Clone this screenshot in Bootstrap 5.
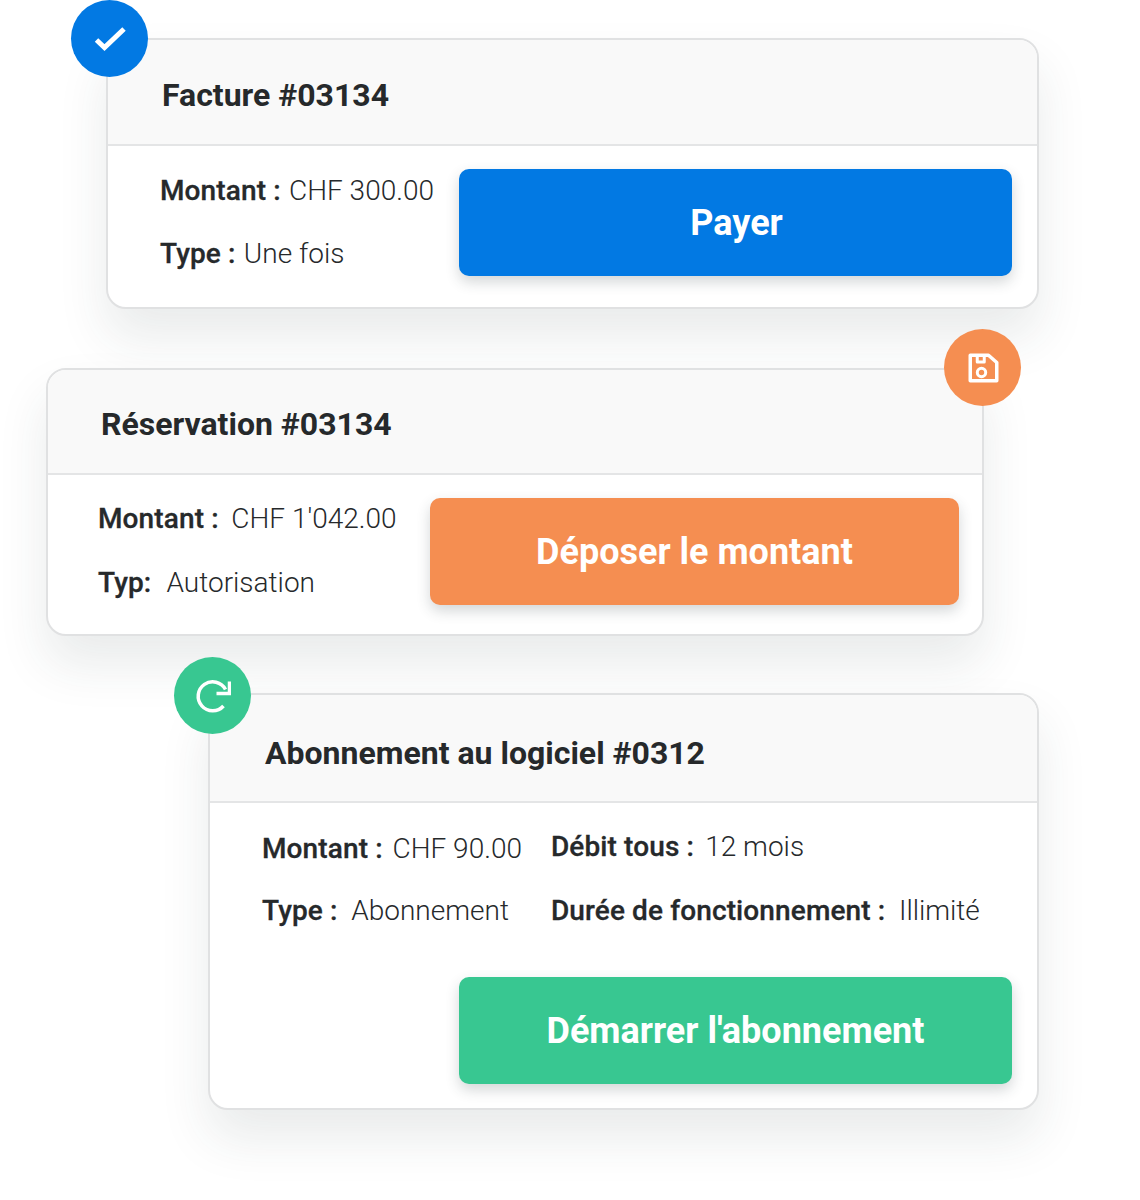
<!DOCTYPE html>
<html lang="fr">
<head>
    <meta charset="UTF-8">
    <meta name="viewport" content="width=device-width, initial-scale=1.0">
    <title>Paiements</title>
    <link href="https://cdn.jsdelivr.net/npm/bootstrap@5.3.0/dist/css/bootstrap.min.css" rel="stylesheet">
    <style>
        body {
            background-color: #fff;
            font-family: Roboto, "Liberation Sans", sans-serif;
            color: #26292b;
        }
        .stack-wrap {
            width: 1140px;
            height: 1200px;
            padding-top: 38px;
            overflow: hidden;
        }
        .pay-card {
            position: relative;
            border: 2px solid #e0e1e2;
            border-radius: 20px;
            background: #fff;
            box-shadow: 0 28px 50px rgba(40, 55, 60, 0.1);
        }
        .pay-card .card-header {
            background: #f9f9f9;
            border-bottom: 2px solid #e4e5e6;
            border-radius: 18px 18px 0 0;
            font-size: 32px;
            font-weight: 700;
            line-height: 36px;
            padding: 0;
            display: flex;
            align-items: center;
        }
        .card-one { margin-left: 105.500px; width: 933px; height: 271px; }
        .pay-card.card-one .card-header { height: 106px; padding-left: 54.500px; padding-top: 6px; }
        .card-two { margin-left: 46px; margin-top: 59px; width: 938px; height: 268px; border-top-right-radius: 0; }
        .pay-card.card-two .card-header { height: 105px; padding-left: 53px; padding-top: 5px; border-top-right-radius: 0; }
        .card-three { margin-left: 208px; margin-top: 57px; width: 831px; height: 417px; }
        .pay-card.card-three .card-header { height: 108px; padding-left: 55px; padding-top: 10px; }
        .status-dot {
            position: absolute;
            width: 77px;
            height: 77px;
            border-radius: 50%;
            display: flex;
            align-items: center;
            justify-content: center;
            z-index: 2;
        }
        .card-one .status-dot { left: -36.500px; top: -40px; background: #0279e3; }
        .card-two .status-dot { left: 896px; top: -41px; background: #f58e51; }
        .card-three .status-dot { left: -36px; top: -38px; background: #38c791; }
        .info-line {
            font-size: 28px;
            line-height: 32px;
            font-weight: 300;
            white-space: nowrap;
        }
        .info-line b {
            font-weight: 500;
            letter-spacing: 0.12px;
            -webkit-text-stroke: 0.3px #26292b;
        }
        .card-one .info-line b { margin-right: 1.5px; }
        .info-line b.wide-gap { margin-right: 3px; }
        .info-line b.mid-gap { margin-right: 1.5px; }
        .info-line b.tight-gap { margin-right: -1px; }
        .info-line b.tighter-gap { margin-right: -2.5px; }
        .action-btn {
            border: 0;
            border-radius: 10px;
            height: 107px;
            color: #fff;
            font-size: 36px;
            font-weight: 700;
            box-shadow: 0 6px 14px rgba(40, 55, 60, 0.2);
        }
        .btn-blue { background: #0279e3; width: 553px; padding-left: 14px; }
        .btn-orange { background: #f58e51; width: 529px; }
        .btn-green { background: #38c791; width: 553px; }
        .pay-card .body-one { padding: 23px 24.500px 0 52.500px; }
        .pay-card .body-two { padding: 23px 23px 0 50px; }
        .pay-card .body-three { padding: 30px 25px 0 52px; }
        .info-col { gap: 31px; padding-top: 6px; }
        .body-two .info-col { gap: 32px; padding-top: 5px; }
        .body-three .info-col { padding-top: 0; gap: 30px; }
        .body-three .info-col + .info-col { margin-top: -2px; gap: 32px; margin-left: 29px; }
        .btn-row { margin-top: 50px; }
    </style>
</head>
<body>
<div class="stack-wrap">

    <div class="card pay-card card-one">
        <div class="status-dot">
            <svg width="36" height="30" viewBox="0 0 36 30" fill="none" stroke="#fff" stroke-width="5"><path d="M4.500 16l8 7.500L32 5"/></svg>
        </div>
        <div class="card-header">Facture #03134</div>
        <div class="card-body body-one d-flex justify-content-between align-items-start">
            <div class="d-flex flex-column info-col">
                <div class="info-line"><b>Montant :</b> CHF 300.00</div>
                <div class="info-line"><b>Type :</b> Une fois</div>
            </div>
            <button type="button" class="btn action-btn btn-blue">Payer</button>
        </div>
    </div>

    <div class="card pay-card card-two">
        <div class="status-dot">
            <svg width="32" height="30" viewBox="1 0 32 30" fill="none" stroke="#fff" stroke-width="3.500" stroke-linejoin="round"><path d="M4.250 2.250H22.500L30.750 9.500V27.750H4.250z"/><path d="M11.250 2.500V9H18.250V2.500" stroke-width="3"/><circle cx="15.500" cy="19.500" r="4.200" stroke-width="3"/></svg>
        </div>
        <div class="card-header">Réservation #03134</div>
        <div class="card-body body-two d-flex justify-content-between align-items-start">
            <div class="d-flex flex-column info-col">
                <div class="info-line"><b class="tight-gap">Montant :</b>&nbsp; CHF 1'042.00</div>
                <div class="info-line"><b class="mid-gap">Typ:</b>&nbsp; Autorisation</div>
            </div>
            <button type="button" class="btn action-btn btn-orange">Déposer le montant</button>
        </div>
    </div>

    <div class="card pay-card card-three">
        <div class="status-dot">
            <svg width="36" height="36" viewBox="0 0 36 36" fill="none" stroke="#fff" stroke-width="3.500"><path d="M30.500 11.500A14.500 14.500 0 1 0 28.500 28"/><path d="M21.500 15.500H34.500V3.500"/></svg>
        </div>
        <div class="card-header">Abonnement au logiciel #0312</div>
        <div class="card-body body-three">
            <div class="d-flex">
                <div class="d-flex flex-column info-col">
                    <div class="info-line"><b class="wide-gap">Montant :</b> CHF 90.00</div>
                    <div class="info-line"><b>Type :</b>&nbsp; Abonnement</div>
                </div>
                <div class="d-flex flex-column info-col">
                    <div class="info-line"><b class="tighter-gap">Débit tous :</b>&nbsp; 12 mois</div>
                    <div class="info-line"><b>Durée de fonctionnement :</b>&nbsp; Illimité</div>
                </div>
            </div>
            <div class="d-flex justify-content-end btn-row">
                <button type="button" class="btn action-btn btn-green">Démarrer l'abonnement</button>
            </div>
        </div>
    </div>

</div>
<script src="https://cdn.jsdelivr.net/npm/bootstrap@5.3.0/dist/js/bootstrap.bundle.min.js"></script>
</body>
</html>
